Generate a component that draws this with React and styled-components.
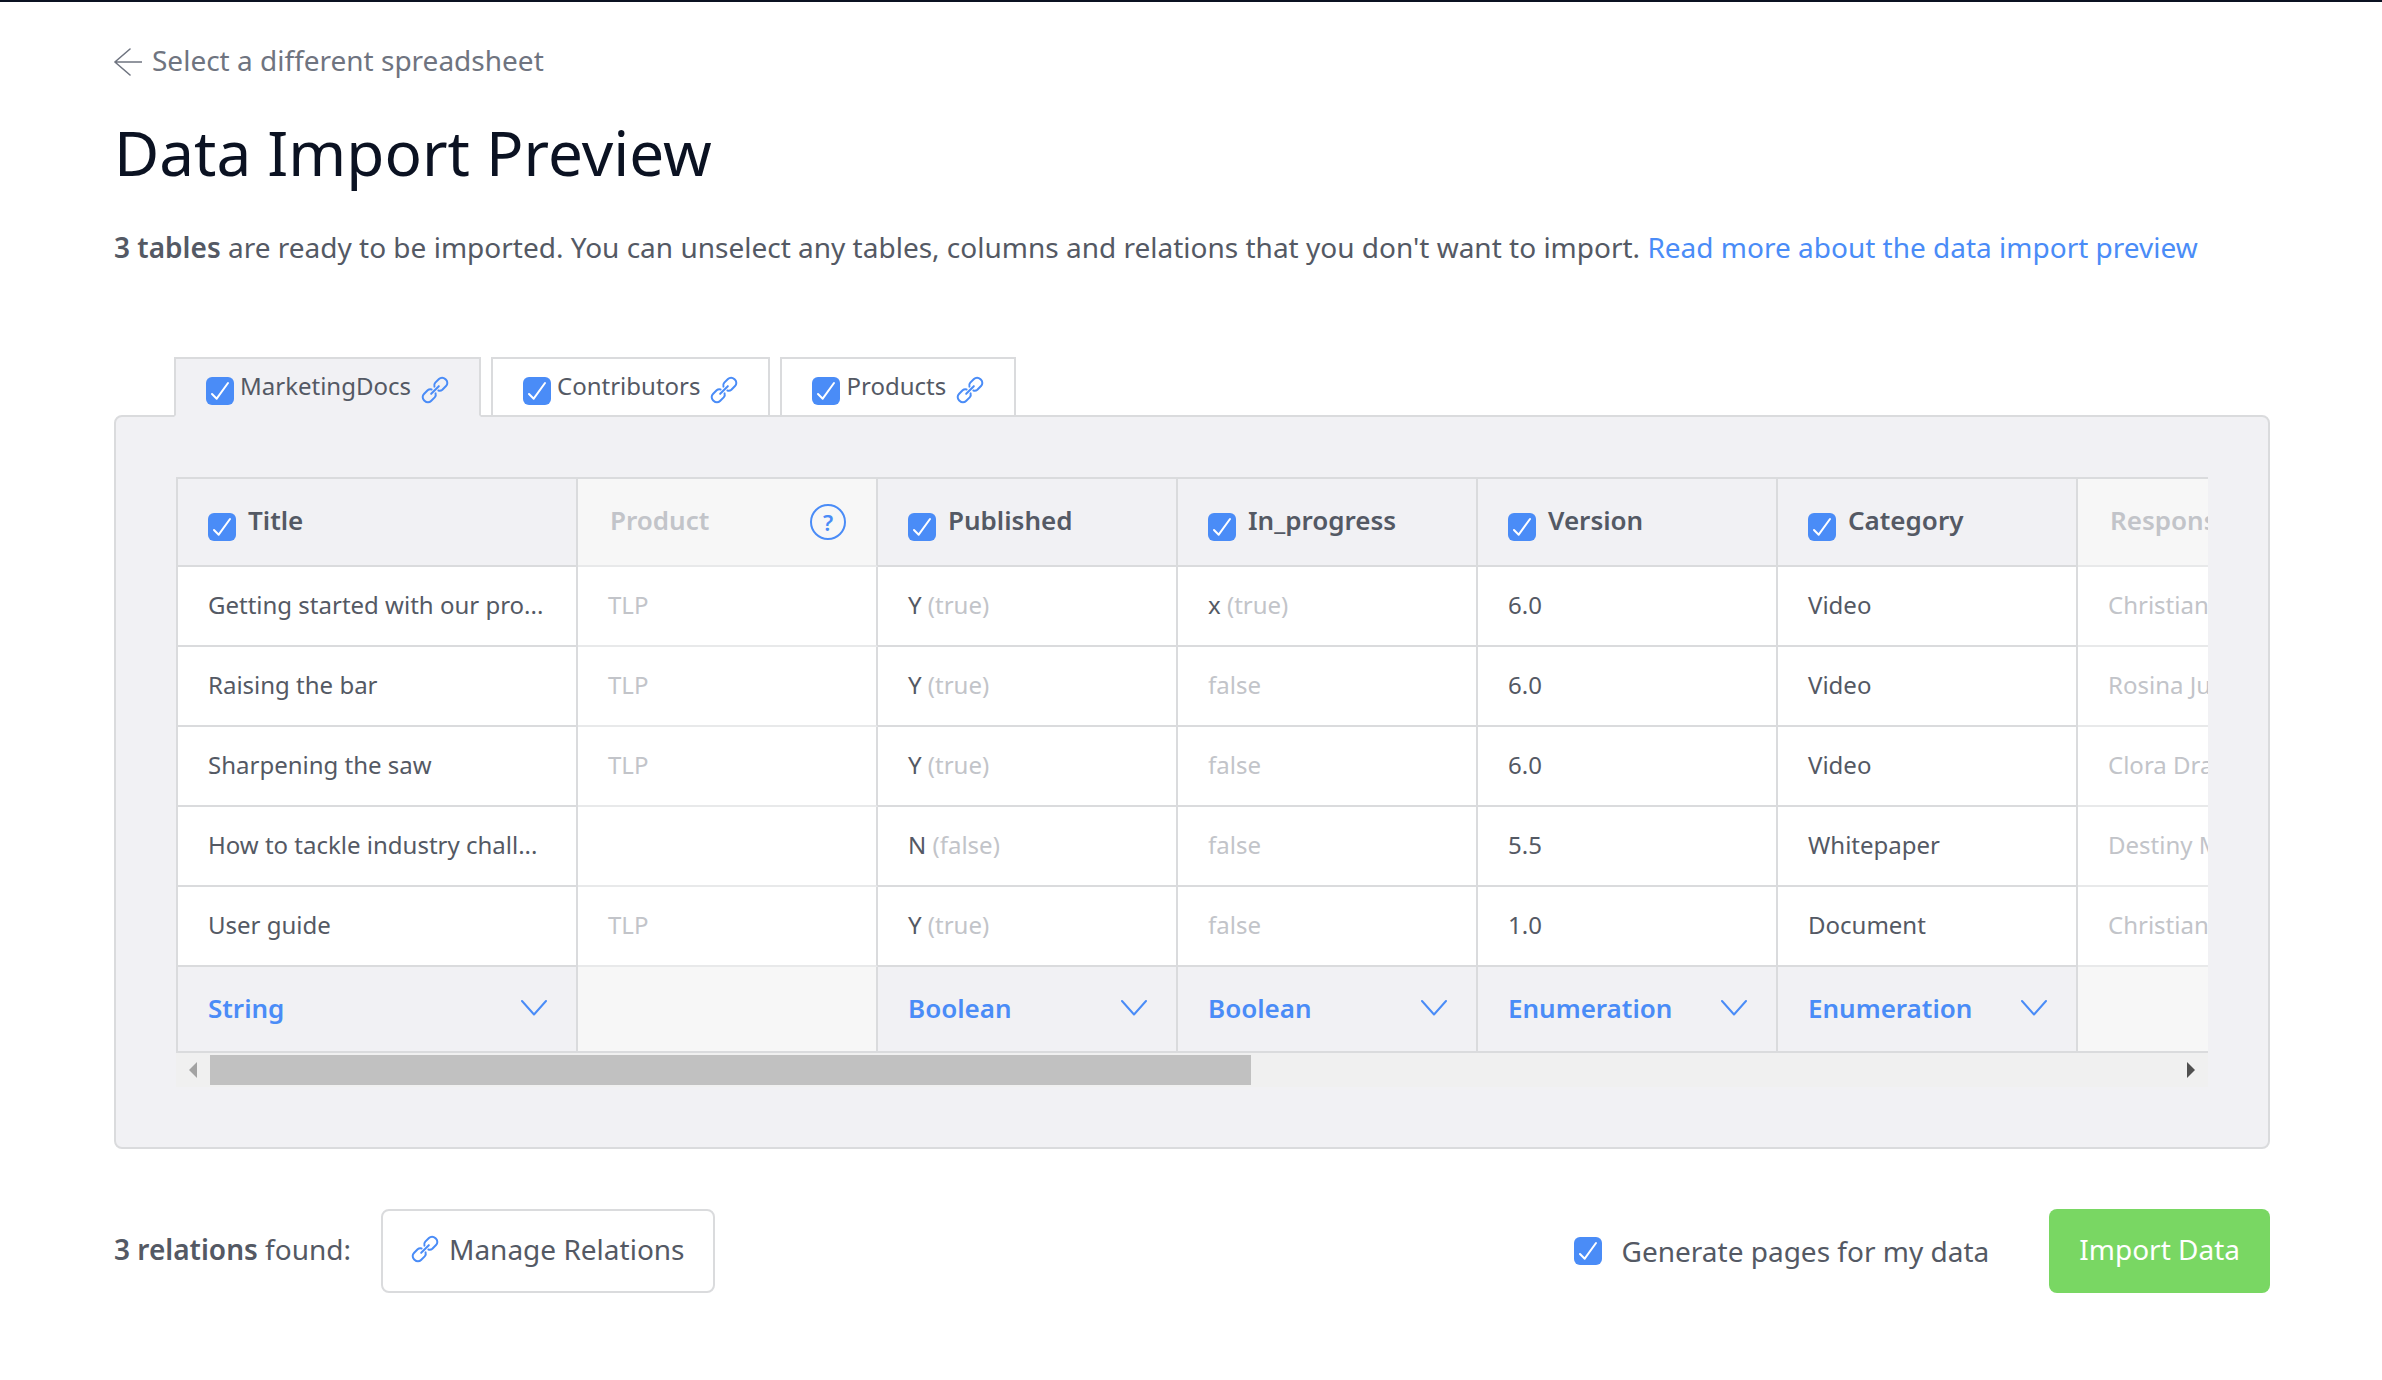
import React from "react";
import styled, { createGlobalStyle, css } from "styled-components";

const c = {
  ink: "#0b1222",
  text: "#545964",
  muted: "#6f7480",
  faint: "#c2c4c9",
  line: "#dadbdd",
  lineSoft: "#e8e9ea",
  panel: "#f1f1f4",
  panelSoft: "#f7f7f7",
  blue: "#4a8cf7",
  green: "#79d763",
};

const tick =
  "url(\"data:image/svg+xml,%3Csvg xmlns='http://www.w3.org/2000/svg' viewBox='0 0 28 28'%3E%3Cpath d='M6 17l4.7 4.7L22 6' fill='none' stroke='white' stroke-width='2' stroke-linecap='round' stroke-linejoin='round'/%3E%3C/svg%3E\")";

const GlobalStyle = createGlobalStyle`
  *, *::before, *::after { box-sizing: border-box; }
  body {
    margin: 0;
    background: #fff;
    color: ${c.text};
    font-family: "Noto Sans", "Open Sans", sans-serif;
    font-size: 28px;
    line-height: 40px;
  }
  button, select, input { font: inherit; color: inherit; margin: 0; }
`;

const Page = styled.main`
  border-top: 2px solid ${c.ink};
  padding: 38px 112px 88px 114px;
`;

const BackLink = styled.a`
  display: flex;
  width: fit-content;
  align-items: center;
  gap: 10px;
  color: ${c.muted};
  text-decoration: none;
`;

const BackArrow = styled.svg`
  margin-top: 3px;
`;

const Heading = styled.h1`
  margin: 28px 0 0;
  color: ${c.ink};
  font-size: 62px;
  line-height: 88px;
  font-weight: 400;
`;

const Intro = styled.p`
  margin: 31px 0 0;
`;

const Strong = styled.strong`
  font-weight: 600;
`;

const TextLink = styled.a`
  color: ${c.blue};
  text-decoration: none;
`;

const Tabs = styled.div`
  display: flex;
  gap: 10px;
  margin: 90px 60px -2px;
`;

const Tab = styled.div`
  position: relative;
  display: flex;
  align-items: center;
  gap: 6px;
  height: 60px;
  padding: 8px 30px 0;
  border: 2px solid ${c.line};
  border-bottom-color: ${(p) => (p.$active ? c.panel : c.line)};
  background: ${(p) => (p.$active ? c.panel : "#fff")};
  font-size: 24px;
  line-height: 32px;
`;

const TabLabel = styled.label`
  padding-bottom: 10px;
`;

const IconButton = styled.button`
  display: flex;
  padding: 0 0 2px 4px;
  border: 0;
  background: none;
  color: ${c.blue};
  cursor: pointer;
`;

const Tick = styled.input.attrs({ type: "checkbox" })`
  appearance: none;
  flex: none;
  width: 28px;
  height: 28px;
  border: 1px solid ${c.line};
  border-radius: 6px;
  background: #fff;
  cursor: pointer;

  &:checked {
    border: 0;
    background: ${c.blue} ${tick} center / 28px 28px no-repeat;
  }
`;

const Panel = styled.section`
  padding: 60px;
  border: 2px solid ${c.line};
  border-radius: 8px;
  background: ${c.panel};
`;

const Scroller = styled.div`
  overflow: hidden;
`;

const Table = styled.table`
  width: 2202px;
  table-layout: fixed;
  border-collapse: separate;
  border-spacing: 0;
  font-size: 24px;
  line-height: 32px;
`;

const Col = styled.col`
  width: ${(p) => (p.$wide ? "402px" : "300px")};
`;

const cell = css`
  border-right: 2px solid ${c.line};
  border-bottom: 2px solid ${(p) => (p.$off ? c.lineSoft : c.line)};
  text-align: left;
  color: ${(p) => (p.$off ? c.faint : c.text)};
  &:first-child { border-left: 2px solid ${c.line}; }
`;

const HeadCell = styled.th`
  ${cell}
  height: 90px;
  padding: 0 30px;
  border-top: 2px solid ${c.line};
  background: ${(p) => (p.$off ? c.panelSoft : c.panel)};
  font-size: 26px;
  font-weight: 600;
`;

const HeadInner = styled.div`
  display: flex;
  align-items: center;
  gap: 12px;
`;

const HeadLabel = styled.label`
  flex: 1;
  padding: 0 0 4px ${(p) => (p.$inset ? "2px" : "0")};
`;

const HeadTick = styled(Tick)`
  margin-top: 10px;
`;

const Help = styled.button`
  flex: none;
  width: 36px;
  height: 36px;
  padding: 0;
  border: 2px solid ${c.blue};
  border-radius: 50%;
  background: none;
  color: ${c.blue};
  font-size: 22px;
  line-height: 32px;
  cursor: pointer;
`;

const Cell = styled.td`
  ${cell}
  height: 80px;
  padding: 0 30px 2px;
  background: #fff;
  white-space: nowrap;
`;

const Hint = styled.span`
  color: ${c.faint};
`;

const TypeCell = styled.td`
  ${cell}
  height: 86px;
  padding: 0;
  border-bottom-color: ${c.line};
  background: ${(p) => (p.$off ? c.panelSoft : c.panel)};
`;

const TypeField = styled.div`
  display: grid;
  align-items: center;
  > * { grid-area: 1 / 1; }
`;

const TypeSelect = styled.select`
  appearance: none;
  width: 100%;
  height: 84px;
  padding: 0 70px 2px 30px;
  border: 0;
  background: none;
  color: ${c.blue};
  font-size: 26px;
  font-weight: 600;
  cursor: pointer;
`;

const Chevron = styled.svg`
  justify-self: end;
  margin: 0 29px 2px 0;
  pointer-events: none;
`;

const ScrollBar = styled.div`
  display: grid;
  grid-template-columns: 34px 1fr 34px;
  align-items: center;
  justify-items: center;
  height: 34px;
  background: #f0f0f0;
`;

const Track = styled.div`
  width: 100%;
`;

const Thumb = styled.div`
  width: 53%;
  height: 30px;
  background: #c1c1c1;
`;

const Footer = styled.footer`
  display: flex;
  align-items: center;
  margin-top: 60px;
`;

const Button = styled.button`
  display: inline-flex;
  align-items: center;
  gap: 10px;
  height: 84px;
  padding: 0 ${(p) => (p.$primary ? "30px" : "28px")} 4px;
  border: ${(p) => (p.$primary ? "0" : `2px solid ${c.line}`)};
  border-radius: 8px;
  background: ${(p) => (p.$primary ? c.green : "#fff")};
  color: ${(p) => (p.$primary ? "#fff" : c.text)};
  cursor: pointer;
`;

const Found = styled.span`
  margin-right: 30px;
  padding-bottom: 4px;
`;

const Generate = styled.label`
  display: flex;
  align-items: center;
  gap: 20px;
  margin: 0 60px 0 auto;
`;

const LinkGlyph = styled.svg`
  flex: none;
  color: ${c.blue};
`;

function LinkIcon() {
  return (
    <LinkGlyph width="28" height="28" viewBox="0 0 28 28" fill="none" stroke="currentColor" strokeWidth="2" strokeLinecap="round" strokeLinejoin="round" aria-hidden="true">
      <g transform="translate(14 14) rotate(-45)">
        <path d="M2 -2.8A4 4 0 0 1 5.4 -5H10.6A4.4 4.4 0 0 1 15 -.6V.6A4.4 4.4 0 0 1 10.6 5H5.4A4 4 0 0 1 2 2.8" />
        <path d="M-2 -2.8A4 4 0 0 0 -5.4 -5H-10.6A4.4 4.4 0 0 0 -15 -.6V.6A4.4 4.4 0 0 0 -10.6 5H-5.4A4 4 0 0 0 -2 2.8" />
        <path d="M-5.4 0H5.4" />
      </g>
    </LinkGlyph>
  );
}

const tabs = ["MarketingDocs", "Contributors", "Products"];

const columns = [
  { name: "Title", type: "String", wide: true },
  { name: "Product", off: true, help: true },
  { name: "Published", type: "Boolean" },
  { name: "In_progress", type: "Boolean" },
  { name: "Version", type: "Enumeration" },
  { name: "Category", type: "Enumeration" },
  { name: "Responsible", off: true },
];

const rows = [
  ["Getting started with our pro...", "TLP", ["Y", "(true)"], ["x", "(true)"], "6.0", "Video", "Christian Ray"],
  ["Raising the bar", "TLP", ["Y", "(true)"], ["", "false"], "6.0", "Video", "Rosina Jung"],
  ["Sharpening the saw", "TLP", ["Y", "(true)"], ["", "false"], "6.0", "Video", "Clora Drake"],
  ["How to tackle industry chall...", "", ["N", "(false)"], ["", "false"], "5.5", "Whitepaper", "Destiny Moss"],
  ["User guide", "TLP", ["Y", "(true)"], ["", "false"], "1.0", "Document", "Christian Ray"],
];

function Value({ value }) {
  if (!Array.isArray(value)) return value;
  return (
    <>
      {value[0] && `${value[0]} `}
      <Hint>{value[1]}</Hint>
    </>
  );
}

export default function App() {
  return (
    <>
      <GlobalStyle />
      <Page>
        <BackLink href="#spreadsheets">
          <BackArrow width="28" height="28" viewBox="0 0 28 28" fill="none" stroke="currentColor" strokeWidth="1.6" strokeLinecap="round" strokeLinejoin="round" aria-hidden="true">
            <path d="M27.5 14H.9M16 1L.9 14 16 27" />
          </BackArrow>
          Select a different spreadsheet
        </BackLink>
        <Heading>Data Import Preview</Heading>
        <Intro>
          <Strong>3 tables</Strong> are ready to be imported. You can unselect any tables, columns and relations that
          you don't want to import. <TextLink href="#help">Read more about the data import preview</TextLink>
        </Intro>

        <Tabs>
          {tabs.map((name, i) => (
            <Tab key={name} $active={i === 0}>
              <Tick id={`tab-${name}`} defaultChecked />
              <TabLabel htmlFor={`tab-${name}`}>{name}</TabLabel>
              <IconButton aria-label={`Relations of ${name}`}>
                <LinkIcon />
              </IconButton>
            </Tab>
          ))}
        </Tabs>

        <Panel>
          <Scroller>
            <Table>
              <colgroup>
                {columns.map((col) => (
                  <Col key={col.name} $wide={col.wide} />
                ))}
              </colgroup>
              <thead>
                <tr>
                  {columns.map((col) => (
                    <HeadCell key={col.name} $off={col.off} scope="col">
                      <HeadInner>
                        {!col.off && <HeadTick id={`col-${col.name}`} defaultChecked />}
                        <HeadLabel as={col.off ? "span" : "label"} htmlFor={col.off ? undefined : `col-${col.name}`} $inset={col.off}>
                          {col.name}
                        </HeadLabel>
                        {col.help && <Help aria-label="Why is this column skipped?">?</Help>}
                      </HeadInner>
                    </HeadCell>
                  ))}
                </tr>
              </thead>
              <tbody>
                {rows.map((row) => (
                  <tr key={row[0]}>
                    {row.map((value, i) => (
                      <Cell key={columns[i].name} $off={columns[i].off}>
                        <Value value={value} />
                      </Cell>
                    ))}
                  </tr>
                ))}
              </tbody>
              <tfoot>
                <tr>
                  {columns.map((col) => (
                    <TypeCell key={col.name} $off={col.off}>
                      {col.type && (
                        <TypeField>
                          <TypeSelect aria-label={`Type of ${col.name}`} defaultValue={col.type}>
                            <option>{col.type}</option>
                          </TypeSelect>
                          <Chevron width="26" height="16" viewBox="0 0 26 16" fill="none" stroke={c.blue} strokeWidth="2" strokeLinecap="round" strokeLinejoin="round" aria-hidden="true">
                            <path d="M1 1l12 13.5L25 1" />
                          </Chevron>
                        </TypeField>
                      )}
                    </TypeCell>
                  ))}
                </tr>
              </tfoot>
            </Table>
          </Scroller>
          <ScrollBar aria-hidden="true">
            <svg width="8" height="16" viewBox="0 0 8 16"><path d="M8 0v16L0 8z" fill="#a3a3a3" /></svg>
            <Track><Thumb /></Track>
            <svg width="8" height="16" viewBox="0 0 8 16"><path d="M0 0v16l8-8z" fill="#505050" /></svg>
          </ScrollBar>
        </Panel>

        <Footer>
          <Found><Strong>3 relations</Strong> found:</Found>
          <Button><LinkIcon />Manage Relations</Button>
          <Generate>
            <Tick defaultChecked />
            Generate pages for my data
          </Generate>
          <Button $primary>Import Data</Button>
        </Footer>
      </Page>
    </>
  );
}
